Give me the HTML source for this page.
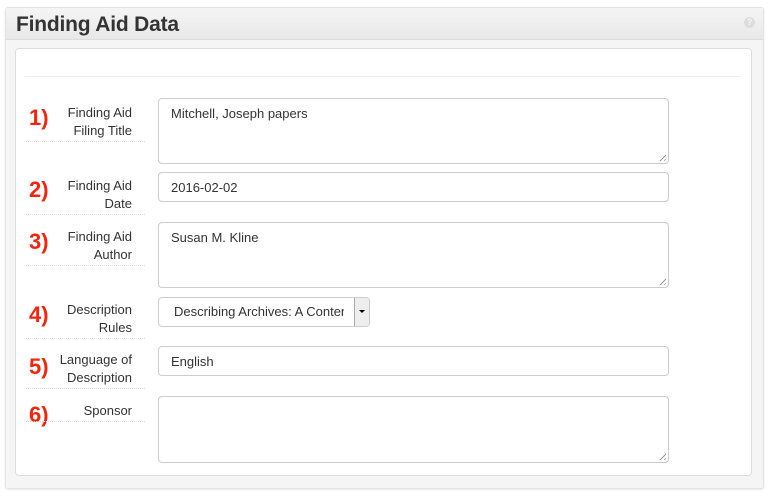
<!DOCTYPE html>
<html><head><style>
body{margin:0;background:#fff;font-family:"Liberation Sans",sans-serif;width:769px;height:494px;position:relative;overflow:hidden}
.outer{position:absolute;left:5px;top:7px;width:757px;height:480px;background:#f5f5f5;border:1px solid #e3e3e3;border-radius:3px;box-shadow:0 1px 2px rgba(0,0,0,.08)}
.hdr{position:absolute;left:0;top:0;right:0;height:31px;background:linear-gradient(#f5f5f5,#e8e8e8);border-bottom:1px solid #ddd}
.hdr h1{margin:0;position:absolute;left:10px;top:5px;font-size:21px;font-weight:bold;color:#333;letter-spacing:-0.2px}
.help{position:absolute;right:8px;top:9px;width:11px;height:11px;border-radius:50%;background:#ddd;color:#f5f5f5;font-size:9px;font-weight:bold;text-align:center;line-height:11px}
.inner{position:absolute;left:15px;top:48px;width:735px;height:426px;background:#fff;border:1px solid #ddd;border-radius:4px}
.hr{position:absolute;left:25px;top:76px;width:716px;border-top:1px solid #eee}
.num{position:absolute;left:29px;font-size:22px;font-weight:bold;color:#f5240b}
.lab{position:absolute;left:26px;width:106px;padding-right:13px;text-align:right;font-size:13px;line-height:18px;color:#333;border-bottom:1px dotted #ddd;padding-bottom:1px}
.in{position:absolute;left:158px;width:497px;border:1px solid #ccc;border-radius:4px;font-size:13px;color:#333;padding:7px 0 0 12px;box-sizing:content-box}
.grip{position:absolute;right:2px;bottom:2px;width:9px;height:9px;background:repeating-linear-gradient(135deg,transparent 0 2px,#999 2px 3px);clip-path:polygon(100% 0,100% 100%,0 100%)}
.sel{position:absolute;left:158px;top:297px;width:210px;height:28px;border:1px solid #ccc;border-radius:4px;font-size:13px;color:#333;overflow:hidden}
.sel span{position:absolute;left:15px;top:6px;width:170px;white-space:nowrap;overflow:hidden}
.sel b{position:absolute;right:0;top:0;width:14px;height:28px;background:#eee;border-left:1px solid #aaa}
.sel b:after{content:"";position:absolute;left:4px;top:12px;border-left:3px solid transparent;border-right:3px solid transparent;border-top:3px solid #000}
</style></head><body>
<div class="outer"><div class="hdr"><h1>Finding Aid Data</h1><div class="help">?</div></div></div>
<div class="inner"></div>
<div class="hr"></div>

<div class="num" style="top:105px">1)</div>
<div class="lab" style="top:104px">Finding Aid<br>Filing Title</div>
<div class="in" style="top:98px;height:57px">Mitchell, Joseph papers<div class="grip"></div></div>

<div class="num" style="top:177px">2)</div>
<div class="lab" style="top:177px">Finding Aid<br>Date</div>
<div class="in" style="top:172px;height:21px">2016-02-02</div>

<div class="num" style="top:229px">3)</div>
<div class="lab" style="top:228px">Finding Aid<br>Author</div>
<div class="in" style="top:222px;height:57px">Susan M. Kline<div class="grip"></div></div>

<div class="num" style="top:302px">4)</div>
<div class="lab" style="top:301px">Description<br>Rules</div>
<div class="sel"><span>Describing Archives: A Content Standard</span><b></b></div>

<div class="num" style="top:354px">5)</div>
<div class="lab" style="top:351px">Language of<br>Description</div>
<div class="in" style="top:346px;height:21px">English</div>

<div class="num" style="top:402px">6)</div>
<div class="lab" style="top:402px">Sponsor</div>
<div class="in" style="top:396px;height:58px"><div class="grip"></div></div>
</body></html>
